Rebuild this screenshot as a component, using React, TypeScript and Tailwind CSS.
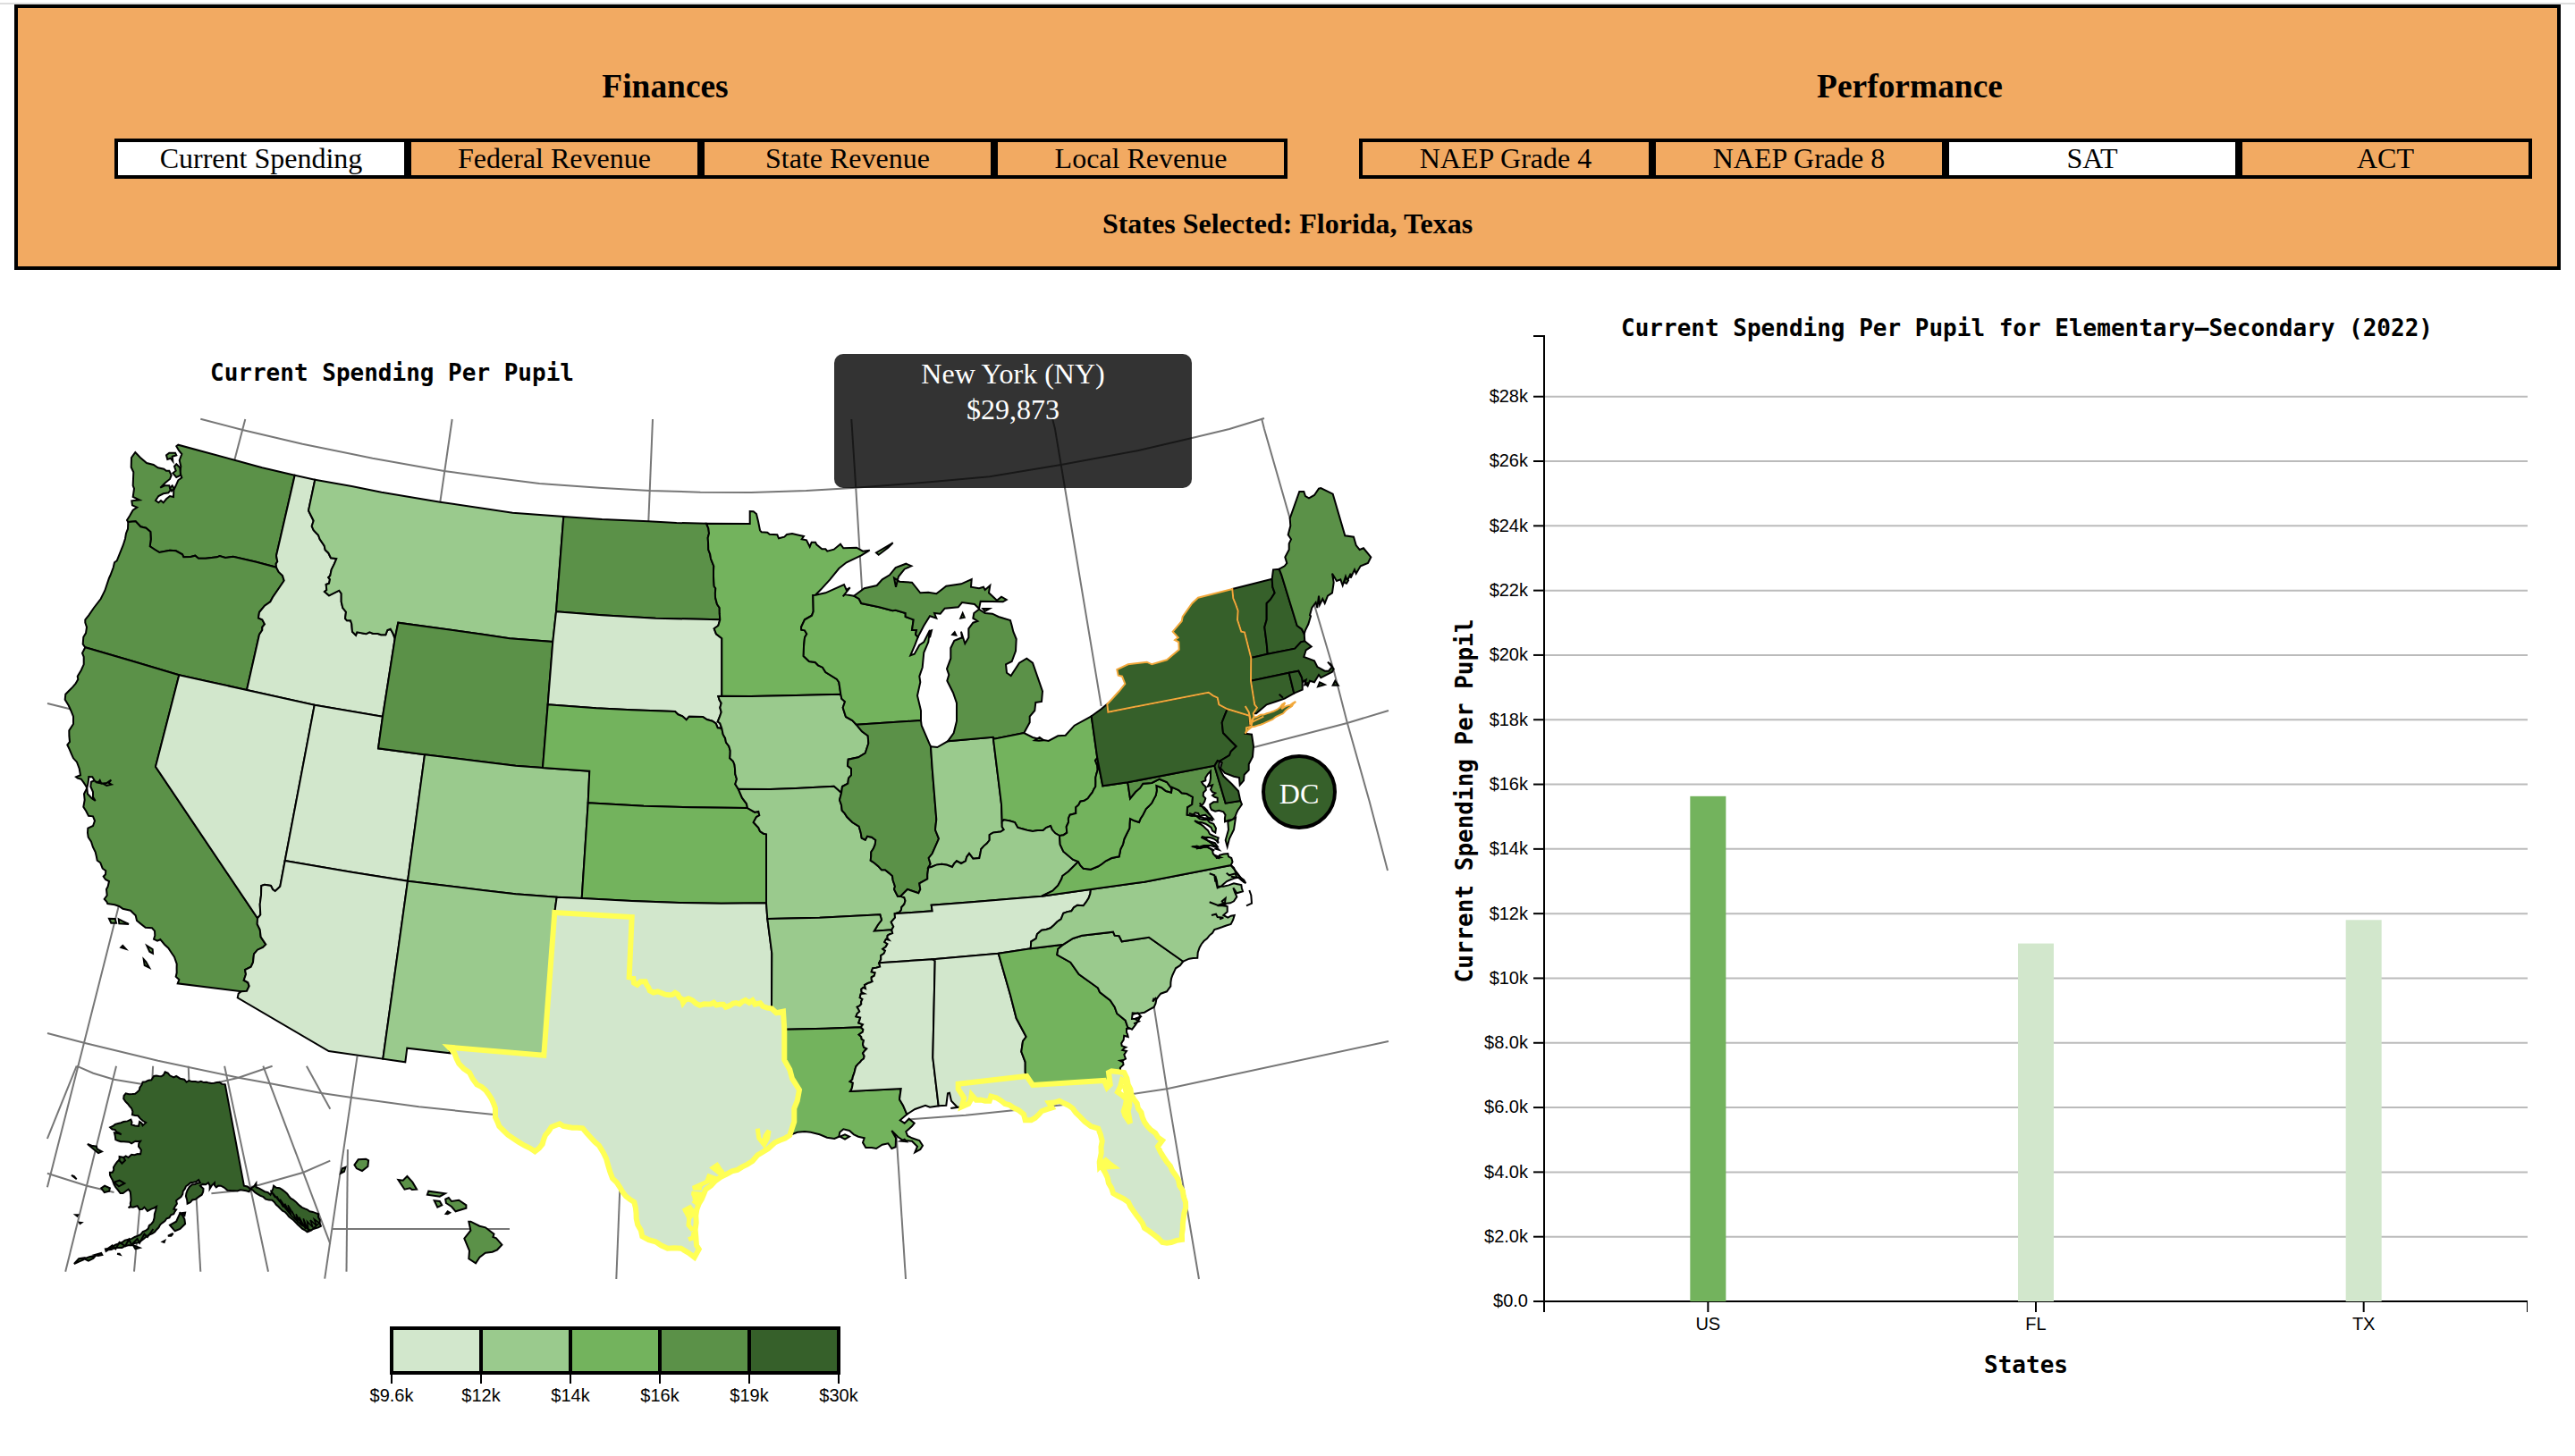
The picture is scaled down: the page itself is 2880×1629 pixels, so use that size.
import React from "react";

type Pt = [number, number];

// Survey sheets: origin on the page, then units per pixel along x and y.
const SHEETS: Record<string, [number, number, number, number]> = {
  a: [60, 380, 3, 3],
  b: [540, 380, 3, 3],
  c: [1040, 480, 3, 3],
  d: [60, 780, 3, 3],
  e: [540, 780, 3, 3],
  f: [900, 860, 3, 3],
  g: [40, 1160, 2.8, 3],
  h: [400, 1100, 3, 3],
  s: [0, 0, 1, 1],
};

function parse(src: string): Pt[] {
  const out: Pt[] = [];
  let sheet = SHEETS.s;
  const tokens = src.trim().split(/[\s,]+/);
  for (let i = 0; i < tokens.length; ) {
    if (/^[a-z]$/.test(tokens[i])) {
      sheet = SHEETS[tokens[i]];
      i += 1;
    } else {
      out.push([sheet[0] + +tokens[i] / sheet[2], sheet[1] + +tokens[i + 1] / sheet[3]]);
      i += 2;
    }
  }
  return out;
}

// Adds small repeatable wiggles to a shoreline or river.
function roughen(pts: Pt[], amp: number, step: number): Pt[] {
  let seed = 7 + pts.length * 13;
  const rnd = () => {
    seed = (seed * 16807) % 2147483647;
    return seed / 2147483647 - 0.5;
  };
  const out: Pt[] = [pts[0]];
  for (let i = 1; i < pts.length; i++) {
    const [x0, y0] = pts[i - 1];
    const [x1, y1] = pts[i];
    const len = Math.hypot(x1 - x0, y1 - y0);
    const n = Math.max(1, Math.round(len / step));
    for (let k = 1; k < n; k++) {
      const t = k / n;
      const o = rnd() * 2 * amp;
      out.push([x0 + (x1 - x0) * t - ((y1 - y0) / len) * o, y0 + (y1 - y0) * t + ((x1 - x0) / len) * o]);
    }
    out.push([x1, y1]);
  }
  return out;
}

const ARCS: Record<string, string> = {
  wa_coast:
    "a 809 455 700 430 607 404 510 378 418 353 412 358 420 372 430 384 422 405 427 425 424 445 430 463 418 472 410 490 403 505 402 528 390 525 378 535 368 547 360 540 352 547 342 540 352 525 368 517 385 514 392 505 388 490 372 490 358 497 375 480 390 468 395 455 388 440 378 440 370 434 350 430 335 420 312 414 290 395 274 378 261 396 260 428 268 445 266 490 270 500 266 528 288 538 262 541 264 556 280 563 266 572 255 592 246 606 250 612",
  wa_or:
    "a 250 612 275 610 292 628 310 632 325 645 326 670 323 694 340 705 355 714 390 707 410 709 432 721 436 730 460 729 475 725 486 734 510 734 548 730 557 726 576 732 602 728 680 746 747 764",
  wa_id: "a 747 764 746 752 751 745 747 725 809 455",
  or_id:
    "a 747 764 755 780 768 792 773 809 735 865 727 880 708 893 690 915 687 934 700 940 708 955 700 965 700 975 690 990 648 1176",
  or_coast:
    "a 250 612 249 635 243 650 240 668 233 690 212 742 204 748 200 765 190 792 186 800 172 842 158 870 135 900 118 925 106 940 106 950 111 965 108 985 100 998 98 1022 106 1033",
  or_ca: "a 106 1033 260 1078 421 1126",
  or_nv: "a 421 1126 648 1176",
  nv_id: "a 648 1176 875 1226",
  id_ut: "a 875 1226 d 1104 65",
  id_wy: "d 1104 65 a 1145 1003",
  id_n: "a 809 455 877 470",
  id_mt:
    "a 877 470 855 574 872 608 866 626 872 640 888 656 893 670 908 692 911 706 922 716 930 733 949 735 942 752 932 772 928 792 922 798 927 805 924 818 914 822 916 840 909 846 924 859 958 842 965 852 965 880 970 900 981 914 978 936 984 943 996 943 1000 955 1002 980 1014 992 1018 982 1048 988 1060 982 1072 987 1088 987 1098 991 1114 991 1120 975 1130 971 1138 985 1145 1003",
  mt_wy: "a 1145 1003 1156 950 1440 989 b 90 1003 235 1014",
  mt_n: "a 877 470 1000 492 1100 512 1297 545 1440 566 b 100 581 271 594",
  mt_nd: "b 271 594 246 913",
  mt_sd: "b 246 913 235 1014",
  nd_n: "b 271 594 400 603 556 610 650 615 750 617",
  nd_sd: "b 246 913 400 925 580 935 796 940",
  sd_wy: "b 235 1014 218 1225",
  sd_ne: "e 218 25 380 37 500 43 645 48 655 58 670 64 683 76 692 65 738 66 752 75 770 80 782 88 788 103 802 105",
  mn_n:
    "b 750 617 896 618 896 576 908 577 918 585 924 610 930 640 935 646 955 647 962 653 988 655 993 667 1012 662 1020 654 1038 651 1060 656 1077 660 1070 670 1086 673 1097 695 1103 680 1116 680 1120 688 1138 703 1150 703 1156 710 1178 704 1200 686 1210 700 1254 698 1275 710 1298 707 1270 724 1220 748 1195 768 1165 805 1135 838 1116 857",
  mn_wi:
    "b 1116 857 1108 858 1109 912 1104 926 1080 940 1068 965 1069 974 1080 976 1087 988 1080 1000 1077 1030 1076 1062 1095 1080 1115 1083 1125 1093 1140 1100 1150 1116 1188 1140 1195 1150 1198 1170 1201 1190",
  mn_nd: "b 750 617 759 650 755 665 757 705 765 735 775 760 776 828 781 835 780 865 786 888 794 900 796 940",
  mn_sd: "b 796 940 790 960 776 970 783 988 802 1003 802 1196",
  mn_ia: "b 802 1196 900 1197 1050 1194 1201 1190",
  sd_ia: "b 802 1196 790 1197 794 1210 800 1220 796 1235 800 1250 e 795 65 788 82 796 88 802 105",
  wy_ne: "e 218 25 201 237",
  wy_co: "d 1245 193 1440 217 e 110 230 201 237",
  co_ne: "e 201 237 358 248 353 355",
  ne_ks: "e 353 355 540 365 700 370 888 372",
  co_ks: "e 353 355 332 675",
  wy_ut: "d 1104 65 1089 172 1245 193",
  ut_co: "d 1245 193 1188 617",
  ut_nv: "d 875 27 776 549",
  ut_az: "d 776 549 1000 587 1188 617",
  az_nv:
    "d 776 549 760 635 753 642 743 651 735 645 729 633 708 629 697 633 696 665 692 695 694 730 684 742",
  ca_nv: "a 421 1126 d 342 233 684 742",
  ca_az:
    "d 684 742 683 762 692 780 695 805 712 830 702 840 684 848 672 862 669 890 662 905 642 915 645 930 638 950 652 958 656 970 648 986 630 988",
  az_s: "d 630 988 620 995 617 1009 923 1188 1105 1214",
  ca_s: "d 416 961 630 988",
  ca_coast:
    "a 106 1033 96 1052 101 1065 101 1090 92 1110 80 1130 82 1140 64 1166 50 1180 40 1190 38 1208 50 1228 58 1245 d 66 65 66 90 52 112 54 150 46 160 66 205 78 218 86 240 90 262 75 268 80 272 92 275 108 298 112 305 102 325 104 345 100 368 117 398 132 400 138 415 132 432 115 440 116 470 126 485 140 520 146 548 157 556 164 575 175 583 174 595 167 602 174 612 186 618 182 635 177 645 179 665 170 678 178 686 181 693 205 697 220 702 232 710 258 716 275 733 279 750 308 773 330 775 339 785 340 800 336 812 348 818 358 813 372 830 385 842 405 872 413 895 413 925 410 938 421 948 416 961",
  az_nm: "d 1188 617 1105 1214",
  co_nm: "d 1188 617 1440 648 e 110 661 248 671",
  co_ok: "e 248 671 332 675",
  ks_ok: "e 332 675 500 684 660 690 800 692 951 691",
  ks_mo: "e 888 372 912 386 925 384 928 397 918 402 908 420 925 438 930 450 942 458 951 460 951 691",
  ne_mo: "e 857 308 870 338 885 358 888 372",
  ne_ia:
    "e 802 105 806 125 816 152 826 165 830 180 829 205 840 215 846 240 847 258 852 275 847 292 857 308",
  ia_mo: "e 857 308 965 309 1050 306 1178 299 1190 310 1203 322",
  ia_wi: "b 1201 1190 e 1204 5 1215 15 1208 35 1218 66 1240 78 1253 92",
  ia_il:
    "e 1253 92 1272 115 1292 130 1294 155 1283 188 1260 202 1226 209 1224 230 1236 240 1236 262 1227 272 1225 290 1206 300 1203 322",
  wi_il: "e 1253 92 1470 78",
  il_mo:
    "e 1203 322 1197 345 1205 380 1222 402 1240 420 1262 434 1268 455 1271 473 1283 479 1290 467 1305 470 1318 480 1316 495 1303 520 1301 548 1338 580 1350 580 1374 600 1376 615 1383 635 1380 645 1392 668 f 322 428",
  mo_ky: "f 322 428 334 432 334 455 325 465 318 482 302 487",
  mo_tn: "f 302 487 303 500 290 515 298 530 292 541",
  mo_ar: "e 955 744 1130 740 1333 730 1338 748 1325 765 1313 785 1372 781",
  mo_ok: "e 951 691 955 744",
  ar_ok: "e 955 744 970 860 969 1045",
  ar_tx: "e 969 1045 985 1060 1008 1055 1012 1115",
  ar_la: "e 1012 1115 1150 1112 f 188 868",
  la_tx: "e 1012 1115 h 1432 258 1450 290 1458 320 1482 358 1475 395 1465 420 1465 465 1450 510",
  tx_coast:
    "h 1450 510 1400 535 1378 555 1342 577 1325 597 1290 617 1240 640 1200 664 1168 692 1145 740 1135 780 1135 850 1137 880 1145 893 1130 920 1110 905 1085 890 1040 890 1000 868 955 850 935 790 928 735 900 715 880 685 855 655 840 610 825 570 810 545 770 505 755 487 720 485 690 480 678 472 650 483 630 510 620 540 595 565 560 545 520 520 490 495 475 480 462 450 462 420 450 390 430 360 400 340 375 300 340 270 325 235 306 215",
  tx_nm: "h 306 215 625 242 e 241 723",
  tx_n: "e 241 723 500 738 491 940",
  tx_ok:
    "e 491 940 518 965 545 955 560 985 600 993 625 1000 645 992 672 1025 690 1012 715 1028 742 1030 775 1025 815 1040 840 1028 870 1022 905 1018 940 1038 969 1045",
  nm_ok: "e 248 671 241 723",
  nm_s: "d 1105 1214 1180 1225 1186 1178 1330 1195 h 306 215",
  ar_tn: "f 292 541 278 560 283 575 268 582 272 598 262 605 266 620 256 640 250 652",
  ar_ms:
    "f 250 652 240 668 228 670 236 685 224 700 227 714 212 720 204 738 190 740 200 755 185 768 190 790 176 800 184 815 176 822 184 845 188 868",
  la_ms:
    "f 188 868 190 900 198 912 195 925 208 940 195 955 200 965 186 985 172 1000 165 1025 152 1050 160 1065 153 1083",
  la_ms_s: "f 153 1083 323 1074 318 1110 330 1130 343 1160",
  la_coast:
    "f 343 1160 320 1180 335 1190 350 1175 368 1190 360 1200 340 1218 345 1232 360 1240 385 1248 396 1265 388 1278 370 1288 378 1268 360 1250 330 1248 312 1235 292 1215 306 1240 305 1270 292 1275 280 1258 260 1262 240 1275 225 1272 205 1272 195 1255 200 1240 180 1235 165 1228 150 1215 130 1210 118 1220 115 1235 100 1242 75 1238 50 1228 20 1220 0 1218 h 1475 500 1450 510",
  ms_coast: "f 343 1160 370 1143 405 1130 420 1136 449 1132",
  ms_al: "f 449 1132 430 970 437 645 430 640",
  ms_tn: "f 250 652 430 640",
  al_tn: "f 430 640 650 620",
  tn_ga: "f 650 620 758 604",
  al_coast: "f 449 1132 475 1130 480 1090 486 1088 492 1115 512 1136 490 1140 527 1135",
  fl_al: "f 527 1135 535 1105 515 1075 515 1058 745 1032",
  al_ga: "f 745 1032 740 1020 740 985 727 950 732 915 743 900 710 838 690 760 650 620",
  fl_ga: "f 745 1032 765 1062 1005 1047 1015 1070 1025 1060 1020 1020 1030 1015 1072 1020",
  fl_coast:
    "f 1072 1020 1085 1060 1065 1045 1050 1085 1080 1110 1070 1150 1092 1190 1085 1150 1090 1110 1075 1070 1085 1060 1105 1110 1150 1200 1200 1248 1185 1268 1215 1320 s 1318 1320 1326 1345 1322 1387 1310 1390 1300 1390 1280 1374 1262 1345 1245 1335 1236 1312 1232 1305 f 1035 1335 1010 1315 990 1335 995 1290 998 1250 985 1208 960 1200 940 1185 910 1155 885 1130 855 1115 820 1122 830 1138 795 1150 760 1180 740 1180 735 1160 700 1138 660 1115 625 1100 620 1115 575 1112 560 1095 550 1125 527 1135",
  ga_coast:
    "f 1072 1020 1068 985 1058 980 1072 960 1066 945 1078 935 1070 910 1085 900 1080 885 1092 872",
  ga_sc:
    "f 1092 872 1084 868 1076 845 1048 822 1040 800 1025 778 990 750 984 736 920 690 892 650 847 625 850 605 868 590",
  ga_nc: "f 758 604 868 590",
  nc_sc: "f 868 590 900 570 930 560 1035 548 1040 560 1055 562 1064 580 1155 566 1270 647",
  sc_coast:
    "f 1270 647 1245 670 1230 705 1228 730 1215 748 1195 755 1180 775 1172 800 1140 818 1100 820 1098 840 1125 835 1110 860 1098 875 1092 872",
  nc_va: "f 960 405 1140 380 1430 324",
  nc_coast:
    "f 1430 324 1445 345 1480 385 1455 365 1430 372 1405 388 1385 400 1378 360 1385 395 1405 395 1440 385 1465 390 1470 412 1450 418 1438 400 1450 430 1440 445 1415 452 1385 460 1418 462 1418 480 1405 492 1420 500 1442 492 1430 522 1400 532 1375 540 1350 570 1325 600 1318 635 1290 638 1270 647",
  nc_tn:
    "f 960 405 958 420 935 460 915 458 895 478 868 485 860 505 825 535 795 542 780 555 776 570 760 580 758 604",
  tn_va: "f 795 428 960 405",
  tn_ky: "f 302 487 428 478 425 458 560 448 795 428",
  ky_va: "f 795 428 832 410 850 392 862 370 865 360 885 345 918 312",
  ky_wv: "f 918 312 900 305 868 278 857 255 855 225",
  ky_oh: "f 855 225 830 205 825 192 810 198 800 207 765 210 735 203 715 198 705 180 668 172 662 178",
  ky_in:
    "f 662 178 662 195 668 205 645 213 620 222 620 240 592 270 586 300 565 302 552 285 540 310 525 318 510 310 495 330 460 320 425 330 415 332",
  ky_il: "f 415 332 412 355 412 370 385 385 388 405 382 418 345 405 332 418 322 428",
  il_in: "f 415 332 422 320 416 300 428 285 450 235 438 205 442 170 428 0 c 3 1066",
  il_lake: "e 1470 78 1472 95 1485 125 1498 155 c 3 1066",
  in_lake: "c 3 1066 25 1068 60 1048",
  in_mi: "c 60 1048 212 1034",
  mi_oh: "c 212 1034 216 1040 316 1020",
  in_oh: "c 212 1034 240 1260 f 662 178",
  oh_lake: "c 316 1020 345 1035 370 1042 398 1047 430 1030 455 1028 485 995 542 964",
  pa_lake: "c 542 964 575 940 595 923",
  oh_pa: "c 542 964 562 1105",
  oh_wv:
    "c 562 1105 555 1112 562 1130 556 1170 556 1200 545 1220 530 1240 505 1250 f 925 110 910 130 910 150 890 155 885 180 878 195 880 215 855 225",
  pa_wv: "c 562 1105 580 1198 664 1186",
  pa_md: "c 664 1186 955 1130",
  pa_ny: "c 595 923 598 950 935 884 950 895 965 902 970 925 998 940",
  pa_nj: "c 998 940 988 965 980 985 984 1020 1005 1042 1028 1065 1010 1082 1005 1095 972 1115",
  pa_de: "c 972 1115 965 1113 955 1130",
  ny_nj: "c 998 940 1072 962",
  nj_coast:
    "c 1072 962 1074 995 1058 1022 1080 1025 1086 1065 1083 1100 1070 1125 1070 1145 1055 1160 1053 1180 1040 1195 1038 1170 1020 1166 990 1155 975 1138 980 1120 972 1115",
  ny_n:
    "c 595 923 612 905 635 880 655 855 645 830 632 827 628 807 665 790 728 782 745 790 795 775 836 740 835 715 822 708 833 700 815 680 845 645 848 630 880 585 900 566 1015 537",
  ny_vt: "c 1015 537 1018 568 1025 585 1034 610 1032 640 1045 680 1056 682 1078 768",
  ny_ma: "c 1078 768 1077 845",
  ny_ct: "c 1077 845 1090 925 1098 935 1085 955",
  nyc: "c 1085 955 1090 975 1075 990 1072 962",
  vt_n: "c 1015 537 1148 503",
  vt_nh: "c 1148 503 1150 530 1157 550 1143 572 1130 585 1130 640 1123 665 1130 720 1133 755",
  vt_ma: "c 1078 768 1133 755",
  nh_ma: "c 1133 755 1225 737 1245 715 1258 712",
  nh_n: "c 1148 503 1152 472 1172 470",
  nh_me: "c 1172 470 1180 490 1232 660 1248 672 1256 688",
  nh_coast: "c 1256 688 1258 712",
  me: "c 1172 470 1190 460 1198 450 1192 430 1205 405 1205 385 1212 370 1202 355 1210 325 1208 300 1240 210 1255 210 1260 225 1272 232 1290 222 1305 200 1312 198 1352 218 1393 358 1422 362 1430 390 1442 405 1455 400 1480 430 1470 450 1445 460 1430 485 1425 472 1412 500 1412 485 1400 510 1395 495 1385 525 1378 505 1365 510 1350 485 1355 515 1350 550 1335 560 1325 585 1318 570 1308 590 1305 560 1300 600 1295 582 1282 600 1275 625 1278 628 1270 655 1260 675 1256 688",
  ma_coast:
    "c 1258 712 1280 730 1262 742 1255 765 1290 778 1300 798 1325 812 1338 812 1350 798 1345 790 1335 782 1355 805 1350 815 1312 835 1305 825 1290 850 1275 845 1268 862 1258 845 1250 850",
  ma_ct: "c 1077 845 1205 818",
  ma_ri: "c 1205 818 1237 812 1248 835 1250 850",
  ct_ri: "c 1205 818 1222 887",
  ri_coast: "c 1250 850 1250 875 1222 887",
  ct_coast: "c 1222 887 1190 905 1160 915 1130 925 1095 955 1085 955",
  de_md: "c 955 1130 992 1256 f 1462 108",
  de_coast: "f 1462 108 c 1035 1215 1012 1190 985 1165 970 1135 972 1115",
  md_coast:
    "f 1462 108 1460 130 1445 160 1410 178 1405 145 1390 140 1365 138 1360 120 1372 112 1385 112 1385 98 1368 90 1378 82 1362 70 1368 55 1352 60 1362 32 1362 8 1345 30 1345 40 1332 45 1345 60 1338 80 1345 100 1328 125 1350 140 1370 168 1345 155 1325 160 1310 148 1300 158 1283 155",
  va_md: "f 1230 80 1232 62 1255 72 1265 82 1282 84 1302 95 1300 120 1284 130 1283 155",
  wv_md: "f 1084 47 1092 100 1110 78 1125 65 1135 50 1165 48 1190 35 1215 45 1230 65 1230 80",
  va_wv:
    "f 1230 80 1180 57 1178 90 1165 115 1145 135 1135 155 1122 180 1092 168 1090 200 1080 220 1060 270 1055 295 1030 300 1010 310 985 328 960 338 935 335 918 312",
  va_coast:
    "f 1283 155 1300 158 1325 168 1350 170 1372 185 1380 200 1378 215 1345 185 1308 175 1345 200 1370 225 1388 232 1388 250 1362 232 1332 228 1362 245 1385 262 1305 262 1360 268 1370 285 1390 300 1392 290 1420 285 1432 300 1430 324",
  wi_sup: "b 1116 857 1150 850 1212 822 1220 840 1232 832 1208 862 1215 855 1245 860",
  mi_wi:
    "b 1245 860 1262 870 1270 885 1330 898 1375 910 1385 908 1418 918 1418 930 1445 940 1440 975 1455 975 1452 990 1460 998",
  mi_up:
    "b 1245 860 1280 835 1322 825 1340 805 1365 790 1385 765 1420 752 1438 760 1415 770 1395 795 1386 830 1380 800 1398 812 1440 815 1468 850 1495 848 c 22 553 55 527 105 520 140 504 138 530 165 535 180 530 185 540 202 525 198 550 225 575 240 563 257 573 245 580 170 578 165 603 150 588 108 582 95 598 50 602 35 620 15 618 22 635 0 628 b 1480 960 1460 998",
  wi_mich:
    "b 1460 998 1450 1025 1435 1060 1448 1055 1465 1025 1480 1015 1500 975 1495 1015 1480 1050 1475 1100 1465 1130 1468 1150 1458 1195 1470 1245 e 1470 78",
  mi_lp:
    "c 60 1048 80 1020 90 980 90 920 78 885 58 845 64 825 57 805 70 770 70 735 82 710 108 700 105 680 118 720 130 700 130 670 145 650 160 645 145 635 148 618 165 605 185 618 210 620 230 630 270 642 275 660 280 680 290 705 288 745 275 780 255 790 258 818 272 828 300 785 325 770 345 785 378 880 375 915 355 918 352 945 335 965 335 985 316 1020",
};

// Shorelines and rivers that carry fine wiggles: amplitude and step in pixels.
const ROUGH: Record<string, [number, number]> = {
  ar_tn: [3, 3],
  ar_ms: [3, 3],
  la_ms: [2.6, 3],
  ga_coast: [4, 3],
  sc_coast: [1, 5],
  md_coast: [2, 4],
  va_coast: [1.6, 4],
  nc_coast: [1, 5],
  tx_ok: [2.4, 4],
  tx_coast: [0.8, 7],
  fl_coast: [1, 6],
  ky_in: [1, 5],
  ky_oh: [0.8, 6],
  oh_wv: [1, 5],
  il_mo: [0.7, 6],
  nc_tn: [1, 5],
  va_wv: [1, 6],
  mo_ky: [1.2, 4],
  mn_nd: [0.8, 6],
  ne_ia: [0.8, 5],
  ca_coast: [0.5, 6],
};

const cache: Record<string, Pt[]> = {};
function arc(name: string): Pt[] {
  if (!cache[name]) {
    const pts = parse(ARCS[name]);
    const r = ROUGH[name];
    cache[name] = r ? roughen(pts, r[0], r[1]) : pts;
  }
  return cache[name];
}

function toPath(pts: Pt[], close = true): string {
  return "M" + pts.map(([x, y]) => `${x.toFixed(1)} ${y.toFixed(1)}`).join("L") + (close ? "Z" : "");
}

// Joins arcs into one closed outline; a leading minus walks the arc backwards.
function ring(spec: string): string {
  const pts: Pt[] = [];
  for (const name of spec.split(" ")) {
    if (name[0] === "-") pts.push(...[...arc(name.slice(1))].reverse());
    else pts.push(...arc(name));
  }
  return toPath(pts);
}

const C1 = "#d2e7cc";
const C2 = "#9aca8d";
const C3 = "#73b35d";
const C4 = "#5b9148";
const C5 = "#36602a";

const STATES: [string, string, string][] = [
  ["WA", C4, "wa_coast wa_or wa_id"],
  ["OR", C4, "or_coast or_ca or_nv -or_id -wa_or"],
  ["ID", C1, "id_n id_mt -id_wy -id_ut -nv_id -or_id wa_id"],
  ["CA", C4, "ca_coast ca_s -ca_az -ca_nv -or_ca"],
  ["NV", C1, "or_nv nv_id ut_nv az_nv -ca_nv"],
  ["UT", C1, "id_ut wy_ut ut_co -ut_az -ut_nv"],
  ["AZ", C1, "ut_az az_nm -az_s -ca_az -az_nv"],
  ["MT", C2, "mt_n mt_nd mt_sd -mt_wy -id_mt"],
  ["WY", C4, "mt_wy sd_wy wy_ne -wy_co -wy_ut id_wy"],
  ["CO", C2, "wy_co co_ne co_ks -co_ok -co_nm -ut_co"],
  ["NM", C2, "co_nm nm_ok -tx_nm -nm_s -az_nm"],
  ["ND", C4, "nd_n mn_nd -nd_sd -mt_nd"],
  ["SD", C1, "nd_sd mn_sd sd_ia -sd_ne -sd_wy -mt_sd"],
  ["NE", C3, "sd_ne ne_ia ne_mo -ne_ks -co_ne -wy_ne"],
  ["KS", C3, "ne_ks ks_mo -ks_ok -co_ks"],
  ["OK", C1, "co_ok ks_ok mo_ok ar_ok -tx_ok -tx_n -nm_ok"],
  ["MN", C3, "mn_n mn_wi -mn_ia -mn_sd -mn_nd"],
  ["IA", C2, "mn_ia ia_wi ia_il -ia_mo -ne_ia -sd_ia"],
  ["MO", C2, "ia_mo il_mo mo_ky mo_tn -mo_ar -mo_ok -ks_mo -ne_mo"],
  ["AR", C2, "mo_ar ar_tn ar_ms -ar_la -ar_tx -ar_ok"],
  ["LA", C3, "ar_la la_ms la_ms_s la_coast -la_tx"],
  ["WI", C3, "wi_sup mi_wi wi_mich -wi_il -ia_wi -mn_wi"],
  ["MI-upper", C4, "mi_up -mi_wi"],
  ["IL", C4, "wi_il il_lake -il_in ky_il -il_mo -ia_il"],
  ["IN", C2, "in_lake in_mi in_oh ky_in il_in"],
  ["MI-lower", C4, "mi_lp -mi_oh -in_mi"],
  ["OH", C3, "mi_oh oh_lake oh_pa oh_wv ky_oh -in_oh"],
  ["KY", C2, "mo_ky tn_ky ky_va ky_wv ky_oh ky_in ky_il"],
  ["TN", C1, "tn_ky tn_va nc_tn -tn_ga -al_tn -ms_tn -ar_tn -mo_tn"],
  ["MS", C1, "ms_tn -ms_al -ms_coast -la_ms_s -la_ms -ar_ms"],
  ["AL", C1, "al_tn -al_ga -fl_al -al_coast ms_al"],
  ["GA", C3, "tn_ga ga_nc -ga_sc -ga_coast -fl_ga al_ga"],
  ["SC", C2, "nc_sc sc_coast ga_sc"],
  ["NC", C2, "nc_va nc_coast -nc_sc -ga_nc -nc_tn"],
  ["VA", C3, "-ky_va tn_va nc_va -va_coast -va_md va_wv"],
  ["WV", C3, "oh_wv -ky_wv -va_wv -wv_md -pa_wv"],
  ["MD", C4, "pa_md de_md md_coast -va_md -wv_md"],
  ["DE", C5, "de_md de_coast pa_de"],
  ["PA", C5, "pa_lake pa_ny pa_nj pa_de -pa_md -pa_wv -oh_pa"],
  ["NJ", C5, "ny_nj nj_coast -pa_nj"],
  ["VT", C5, "vt_n vt_nh -vt_ma -ny_vt"],
  ["NH", C5, "nh_n nh_me nh_coast -nh_ma -vt_nh"],
  ["ME", C4, "me -nh_me"],
  ["MA", C5, "vt_ma nh_ma ma_coast -ma_ri -ma_ct -ny_ma"],
  ["CT", C5, "ma_ct ct_ri ct_coast -ny_ct"],
  ["RI", C5, "ma_ri ri_coast -ct_ri"],
];

const AK =
  "g 593 160 575 152 550 156 535 152 500 150 480 147 472 152 465 143 452 140 440 132 432 136 420 130 405 118 400 128 385 132 370 132 362 145 335 152 326 170 318 185 302 192 282 190 275 208 288 225 300 240 302 262 320 265 345 288 335 298 325 285 322 300 300 295 298 278 275 285 233 304 248 312 268 328 246 322 250 345 275 352 300 358 312 350 328 350 322 368 330 380 328 394 300 395 290 405 282 400 262 412 248 430 240 455 232 455 240 480 245 495 250 505 265 525 280 520 290 512 297 530 297 568 290 574 305 572 318 568 325 580 340 572 350 585 362 578 378 570 372 595 368 620 345 650 310 672 290 680 270 690 240 705 218 712 220 720 245 710 270 708 300 700 330 685 365 660 385 640 410 610 432 595 440 580 432 578 442 560 440 550 460 528 470 502 485 490 510 480 515 490 490 496 475 515 470 535 475 560 500 545 520 530 525 510 515 500 540 490 545 510 560 490 565 505 580 500 600 515 622 517 650 515 668 520 690 492 690 505 735 530 745 500 780 520 820 560 850 580 885 595 893 635 850 655 820 630 800 610 760 570 740 548 720 545 680 515 652 500";

const PANHANDLE =
  "g 735 515 750 540 742 525 765 555 755 535 775 572 765 545 790 585 780 560 800 600 790 565 815 612 802 585 822 625 815 595 835 635 825 605 845 645 838 610 855 655 850 620 868 640 860 615 880 635 872 612 888 625 862 650 830 630 800 600 770 560";

const ISLANDS: [string, string][] = [
  [C4, "a 378 388 388 380 408 380 412 388 398 392 400 408 392 398 382 402"],
  [C4, "a 405 425 412 418 424 430 426 455 412 462 400 448 410 440"],
  [C4, "a 390 498 398 490 404 500 396 508"],
  [C4, "d 186 743 206 744 210 758 193 758"],
  [C4, "d 218 745 232 752 252 762 220 760"],
  [C4, "d 226 840 232 834 242 845"],
  [C4, "d 313 834 332 846 333 860 322 854"],
  [C4, "d 302 880 310 888 321 908 305 900"],
  [C3, "b 1320 715 1376 682 1360 698 1328 722"],
  [C4, "c 103 635 110 618 116 632"],
  [C4, "c 76 690 83 682 88 692"],
  [C4, "c 178 603 200 603 185 612"],
  [C4, "c 0 678 6 676 0 700"],
  [C3, "c 352 1045 368 1035 382 1045 366 1046"],
  [C5, "c 1302 865 1308 850 1325 858"],
  [C5, "c 1352 860 1360 845 1370 860"],
  [C4, "c 1390 515 1396 500 1404 508 1398 518"],
  [C3, "f 1420 178 1446 165 1440 205 1425 235 1418 262 1412 240 1422 205"],
  [C3, "f 118 1235 135 1228 150 1235 135 1244"],
  [C3, "f 322 1250 335 1244 342 1252"],
  [C5, "g 162 360 175 365 190 368 192 376 207 385 196 390 182 378"],
  [C5, "g 112 465 120 468 128 478"],
  [C5, "g 205 508 216 500 232 508 230 518 215 522"],
  [C5, "g 420 632 440 620 452 592 460 600 466 612 468 628 452 645 436 652"],
  [C5, "g 455 592 468 590 466 600"],
  [C5, "g 414 668 430 660 424 668"],
  [C5, "g 397 688 404 684 402 690"],
  [C5, "g 125 598 132 598 130 602"],
  [C5, "g 137 623 143 624 139 627"],
  [C5, "g 120 762 135 745 152 742 150 748 135 755"],
  [C5, "g 152 745 170 738 188 734 180 744 165 752"],
  [C5, "g 185 732 205 726 208 732 195 735"],
  [C5, "g 255 728 262 728 264 731"],
  [C5, "g 262 402 275 405 280 415 270 425 262 415"],
  [C5, "g 245 488 262 482 278 492 260 502"],
  [C5, "g 305 700 325 708 312 712"],
  [C4, "g 955 458 960 442 970 438 966 452"],
  [C4, "g 998 430 1010 412 1034 410 1042 415 1040 435 1022 450 1005 442"],
  [C4, "g 1135 480 1150 482 1163 468 1180 488 1193 512 1178 513 1172 508 1155 512"],
  [C4, "g 1226 530 1230 518 1282 526 1265 536"],
  [C4, "g 1248 550 1265 552 1272 565 1258 572"],
  [C4, "g 1283 545 1293 540 1302 552 1325 548 1348 565 1348 575 1315 586 1302 570 1285 558"],
  [C4, "g 1284 594 1290 586 1297 590 1290 595"],
  [C4, "g 1356 620 1362 620 1390 635 1408 640 1435 662 1432 672 1442 676 1460 698 1445 715 1430 722 1408 725 1390 740 1378 760 1356 745 1358 718 1342 677 1362 650"],
];

const GRATICULE = [
  "a 493 266 634 303 835 350 1070 398 1310 441 1440 459 b 190 483 390 497 560 507 730 512 900 513 1085 507 1240 498 1500 478 c 200 160 440 120 700 72 880 30 s 1375 480 1414 468",
  "a 643 267 607 404",
  "a 1337 267 1297 545",
  "b 570 267 556 610",
  "b 1237 267 1252 500 1273 850",
  "s 1177 468 c 420 0 440 120 575 930",
  "s 1411 468 c 1122 0 1208 300 1293 600 1355 810 1400 985 1475 1250 s 1552 974",
  "c 1088 1068 1400 987 s 1553 795",
  "s 53 787 a 55 1240",
  "s 53 1156 d 102 1160 350 1220 g 635 137 735 157 890 188 990 204 1200 235 1435 261",
  "d 218 702 102 1160 g 36 505",
  "g 1007 65 905 812",
  "h 880 690 868 993",
  "f 308 1235 s 1013 1431",
  "f 1172 800 1215 1075 s 1341 1431",
  "f 355 1177 540 1163 700 1147 870 1128",
  "f 1100 1092 1215 1075 s 1553 1165",
  "g 128 98 36 342",
  "g 252 98 93 788",
  "g 367 98 365 140",
  "g 326 570 308 788",
  "g 478 98 480 150",
  "g 503 540 516 788",
  "g 591 98 640 345 728 788",
  "g 712 98 922 695",
  "g 848 98 922 242",
  "g 128 98 180 122 245 143 330 158",
  "g 575 152 635 137 741 98",
  "g 36 458 160 500 245 522",
  "g 550 526 620 518 700 497 838 455 922 416",
  "g 977 378 973 788",
  "g 927 645 1484 645",
];

const INLETS = [
  "f 1492 408 1498 425 1500 452 1482 460",
  "f 1358 352 1375 358 1378 380",
  "f 1358 448 1385 458 1410 456 1400 445 1412 435 1410 450",
  "f 1365 492 1380 488 1385 498 1405 500 1392 505",
  "f 1415 350 1425 358 1445 352 1450 365 1430 362",
  "f 1430 324 1455 355 1475 382",
  "f 1325 115 1340 135 1360 155",
  "f 1290 150 1320 160 1370 175 1345 165",
  "f 1330 230 1350 240 1380 262 1390 272 1375 268",
  "f 1300 262 1320 262 1318 268 1350 262 1375 275",
  "f 1375 290 1395 298 1380 300 1392 292",
  "c 1172 890 1185 902",
  "c 1252 848 1262 842 1258 858 1270 852 1262 862",
  "f 1172 770 1168 782 1180 768",
  "f 1100 825 1118 820 1128 832 1108 840 1122 848 1104 856",
];

const TX_BAYS = [
  "h 1342 488 1346 520 1362 540 1368 512 1380 495 1376 520 1362 545",
  "h 1212 606 1192 620 1215 638 1230 632",
  "h 1172 645 1200 655 1175 665 1125 688 1155 688",
  "h 1120 705 1150 708 1140 740 1125 730",
  "h 1092 765 1115 752 1128 770 1112 790 1110 812 1125 830",
  "h 1110 860 1125 855 1128 835",
];

const ALEUTIANS =
  "g 218 716 240 700 250 712 262 690 280 702 292 680 300 698 318 678 325 692 340 662 350 672 368 645";

const LONG_ISLAND =
  "c 1085 970 1100 965 1130 955 1165 942 1192 918 1180 940 1228 915 1215 930 1185 955 1150 975 1110 992 1080 1000 1058 1022 1062 1003 1078 998";
const HARBOR = "c 1058 930 1070 950 1078 985 1088 965 1078 985 1120 965";

function MapView() {
  return (
    <svg className="block h-[1327px] w-[1600px] shrink-0" viewBox="0 302 1600 1327">
      <text x="235" y="426" fontSize="26" fontWeight="700" fontFamily="'DejaVu Sans Mono', monospace">
        Current Spending Per Pupil
      </text>
      <g fill="none" stroke="#777777" strokeWidth="2">
        {GRATICULE.map((g, i) => (
          <path key={i} d={toPath(parse(g), false)} />
        ))}
      </g>
      <g stroke="#000" strokeWidth="2">
        {STATES.map(([id, fill, spec]) => (
          <path key={id} fill={fill} d={ring(spec)} />
        ))}
        <path fill={C5} d={toPath(roughen(parse(AK), 1, 3.5))} />
        <path fill={C5} strokeWidth="1.6" d={toPath(parse(PANHANDLE))} />
        {ISLANDS.map(([fill, p], i) => (
          <path key={i} fill={fill} d={toPath(parse(p))} />
        ))}
        <path fill="none" d={toPath(parse(ALEUTIANS), false)} />
        <path
          fill="#fff"
          d={toPath(parse("d 112 305 116 285 118 267 130 268 137 280 126 284 124 300 132 318 132 335 140 348 128 340 114 325"))}
        />
        <path
          fill="none"
          d={toPath(parse("d 137 283 150 286 155 279 160 290 178 288 193 278 185 288 194 293 178 297 165 290 142 286"), false)}
        />
        {INLETS.map((p, i) => (
          <path key={i} fill="none" d={toPath(parse(p), false)} />
        ))}
      </g>
      <g fill={C5} stroke="#f2a83b" strokeWidth="2">
        <path d={ring("ny_n ny_vt ny_ma ny_ct nyc -ny_nj -pa_ny")} />
        <path d={toPath(roughen(parse(LONG_ISLAND), 0.8, 4))} />
        <path fill="none" d={toPath(parse(HARBOR), false)} />
      </g>
      <g fill={C1} stroke="#ffff54" strokeWidth="6">
        <path d={ring("tx_n tx_ok ar_tx la_tx tx_coast tx_nm")} />
        <path d={ring("fl_al fl_ga fl_coast")} />
        {TX_BAYS.map((p, i) => (
          <path key={i} fill="#ffff54" strokeWidth="5" d={toPath(parse(p), false)} />
        ))}
      </g>
      <circle cx="1453" cy="886" r="40" fill={C5} stroke="#000" strokeWidth="4" />
      <text x="1453" y="899" textAnchor="middle" fontSize="32" fill="#fff" fontFamily="'Liberation Serif', serif">
        DC
      </text>
      <g fontSize="20" textAnchor="middle" fontFamily="'Liberation Sans', sans-serif">
        {[C1, C2, C3, C4, C5].map((c, i) => (
          <rect key={c} x={438 + i * 100} y="1486" width="100" height="50" fill={c} stroke="#000" strokeWidth="4" />
        ))}
        {["$9.6k", "$12k", "$14k", "$16k", "$19k", "$30k"].map((t, i) => (
          <g key={t}>
            <path d={`M${438 + i * 100} 1536V1548`} stroke="#000" strokeWidth="2" />
            <text x={438 + i * 100} y="1567.5">
              {t}
            </text>
          </g>
        ))}
      </g>
    </svg>
  );
}

const MAX = 29873;
const yOf = (v: number) => 1456 - (v / MAX) * 1080;
const TICKS = Array.from({ length: 15 }, (_, i) => i * 2000);
const tickLabel = (v: number) => (v === 0 ? "$0.0" : v < 10000 ? `$${(v / 1000).toFixed(1)}k` : `$${v / 1000}k`);
const BARS: [string, number, string][] = [
  ["US", 15633, C3],
  ["FL", 11076, C1],
  ["TX", 11803, C1],
];

function BarChart() {
  return (
    <svg className="block h-[1327px] w-[1280px] shrink-0" viewBox="1600 302 1280 1327">
      <g fontSize="26" fontWeight="700" textAnchor="middle" fontFamily="'DejaVu Sans Mono', monospace">
        <text x="2267" y="376">
          Current Spending Per Pupil for Elementary—Secondary (2022)
        </text>
        <text x="2266" y="1536">States</text>
        <text transform="translate(1647 896) rotate(-90)">Current Spending Per Pupil</text>
      </g>
      <g stroke="#bbbbbb" strokeWidth="2">
        {TICKS.slice(1).map((v) => (
          <path key={v} d={`M1727 ${yOf(v)}H2827`} />
        ))}
      </g>
      <path d="M1715 376H1727V1456H1715M1727 1468V1456H2827" fill="none" stroke="#000" strokeWidth="2" />
      <path d="M2826.5 1456V1468" stroke="#000" />
      <g fontSize="20" fontFamily="'Liberation Sans', sans-serif">
        {TICKS.map((v) => (
          <g key={v}>
            <path d={`M1715 ${yOf(v)}H1727`} stroke="#000" strokeWidth="2" />
            <text x="1709" y={yOf(v) + 6.4} textAnchor="end">
              {tickLabel(v)}
            </text>
          </g>
        ))}
        {BARS.map(([name, v, fill], i) => {
          const x = 1727 + ((i + 0.5) * 1100) / 3;
          return (
            <g key={name}>
              <path d={`M${x} 1456V1468`} stroke="#000" strokeWidth="2" />
              <rect x={x - 20} y={yOf(v)} width="40" height={1456 - yOf(v)} fill={fill} />
              <text x={x} y="1488" textAnchor="middle">
                {name}
              </text>
            </g>
          );
        })}
      </g>
    </svg>
  );
}

function Group({ title, items, active }: { title: string; items: string[]; active: string }) {
  return (
    <section className="w-[1392px]">
      <h3 className="h-[45px] text-center text-[37.44px] leading-[45px] font-bold">{title}</h3>
      <ul className="mt-[36px] ml-20 flex">
        {items.map((t) => (
          <li
            key={t}
            className={
              "h-[45px] w-[328px] border-4 border-black text-center text-[32px] leading-[37px] " +
              (t === active ? "bg-white" : "bg-[#f2aa62]")
            }
          >
            {t}
          </li>
        ))}
      </ul>
    </section>
  );
}

export default function App() {
  return (
    <div className="relative h-[1629px] w-[2880px] overflow-hidden bg-white font-['Liberation_Serif',serif] text-black">
      <div className="mt-[3px] h-[2px] bg-[#dddddd]" />
      <header className="mx-4 h-[297px] border-4 border-black bg-[#f2aa62]">
        <div className="ml-[28px] flex pt-[65px]">
          <Group
            title="Finances"
            items={["Current Spending", "Federal Revenue", "State Revenue", "Local Revenue"]}
            active="Current Spending"
          />
          <Group title="Performance" items={["NAEP Grade 4", "NAEP Grade 8", "SAT", "ACT"]} active="SAT" />
        </div>
        <p className="mt-[32px] text-center text-[32px] leading-[37px] font-bold">States Selected: Florida, Texas</p>
      </header>
      <main className="flex">
        <MapView />
        <BarChart />
      </main>
      <div className="absolute top-[396px] left-[933px] h-[150px] w-[400px] rounded-[10px] bg-black/80 pt-[2px] text-center text-[32px] leading-[40px] text-white">
        <div>New York (NY)</div>
        <div>$29,873</div>
      </div>
    </div>
  );
}
